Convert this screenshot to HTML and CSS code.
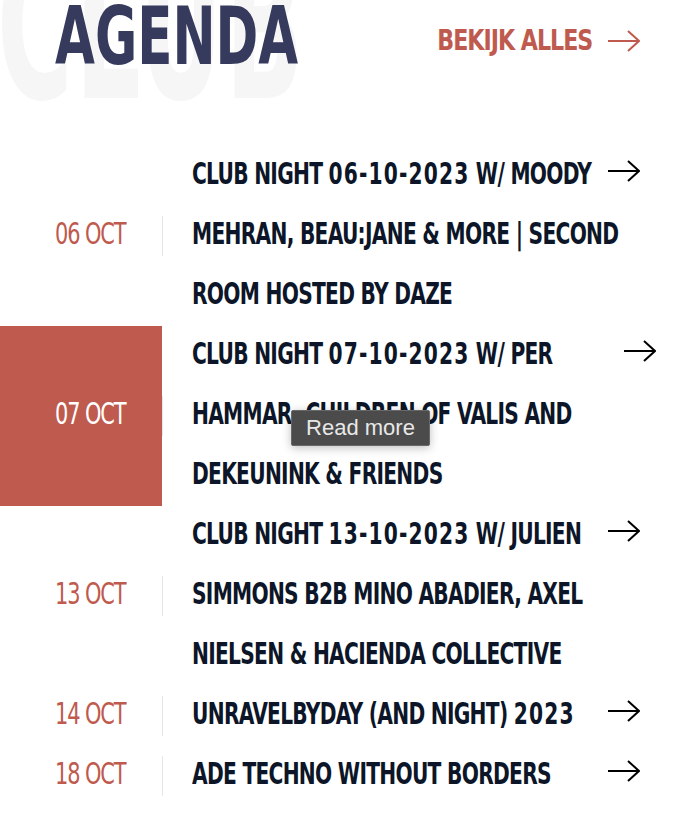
FILE: index.html
```html
<!DOCTYPE html>
<html lang="nl">
<head>
<meta charset="utf-8">
<title>Agenda</title>
<link rel="stylesheet" href="styles.css">
</head>
<body>
<section class="agenda">
  <div class="bg-word" aria-hidden="true">CLUB</div>
  <header class="agenda-head">
    <h2 class="agenda-title">AGENDA</h2>
    <a class="see-all" href="#"><span class="see-all-text">BEKIJK ALLES</span>
      <svg class="arrow-icon" viewBox="0 0 32 22" width="32" height="22"><path d="M0 11H30M20 1L31 11L20 21" fill="none" stroke="currentColor" stroke-width="2"/></svg>
    </a>
  </header>
  <ul class="events">
    <li class="event">
      <div class="event-date"><span class="date-text">06 OCT</span></div>
      <div class="event-name"><span class="name-text">CLUB NIGHT <span class="num">06-10-2023</span> W/ MOODY<br>MEHRAN, BEAU:JANE &amp; MORE | SECOND<br>ROOM HOSTED BY DAZE</span></div>
      <span class="event-arrow"><svg class="arrow-icon" viewBox="0 0 32 22" width="32" height="22"><path d="M0 11H30M20 1L31 11L20 21" fill="none" stroke="currentColor" stroke-width="2"/></svg></span>
    </li>
    <li class="event is-active">
      <div class="event-date"><span class="date-text">07 OCT</span></div>
      <div class="event-name"><span class="name-text">CLUB NIGHT <span class="num">07-10-2023</span> W/ PER<br>HAMMAR, CHILDREN OF VALIS AND<br>DEKEUNINK &amp; FRIENDS</span></div>
      <span class="event-arrow"><svg class="arrow-icon" viewBox="0 0 32 22" width="32" height="22"><path d="M0 11H30M20 1L31 11L20 21" fill="none" stroke="currentColor" stroke-width="2"/></svg></span>
    </li>
    <li class="event">
      <div class="event-date"><span class="date-text">13 OCT</span></div>
      <div class="event-name"><span class="name-text">CLUB NIGHT <span class="num">13-10-2023</span> W/ JULIEN<br>SIMMONS B2B MINO ABADIER, AXEL<br>NIELSEN &amp; HACIENDA COLLECTIVE</span></div>
      <span class="event-arrow"><svg class="arrow-icon" viewBox="0 0 32 22" width="32" height="22"><path d="M0 11H30M20 1L31 11L20 21" fill="none" stroke="currentColor" stroke-width="2"/></svg></span>
    </li>
    <li class="event">
      <div class="event-date"><span class="date-text">14 OCT</span></div>
      <div class="event-name"><span class="name-text">UNRAVELBYDAY (AND NIGHT) <span class="num">2023</span></span></div>
      <span class="event-arrow"><svg class="arrow-icon" viewBox="0 0 32 22" width="32" height="22"><path d="M0 11H30M20 1L31 11L20 21" fill="none" stroke="currentColor" stroke-width="2"/></svg></span>
    </li>
    <li class="event">
      <div class="event-date"><span class="date-text">18 OCT</span></div>
      <div class="event-name"><span class="name-text">ADE TECHNO WITHOUT BORDERS</span></div>
      <span class="event-arrow"><svg class="arrow-icon" viewBox="0 0 32 22" width="32" height="22"><path d="M0 11H30M20 1L31 11L20 21" fill="none" stroke="currentColor" stroke-width="2"/></svg></span>
    </li>
  </ul>
  <div class="tooltip">Read more</div>
</section>
</body>
</html>
```

FILE: styles.css
```css
* { box-sizing: border-box; }

html, body {
  margin: 0;
  padding: 0;
  background: #ffffff;
}

body {
  width: 700px;
  height: 830px;
  overflow: hidden;
  font-family: "DejaVu Sans Condensed", "DejaVu Sans", "Liberation Sans", sans-serif;
}

.agenda {
  position: relative;
  overflow: hidden;
}

.bg-word {
  position: absolute;
  left: -3px;
  top: -75px;
  font-size: 205px;
  line-height: 1;
  font-weight: 700;
  color: #f6f6f6;
  transform: scaleX(0.56);
  transform-origin: left top;
  letter-spacing: 4px;
  z-index: 0;
  white-space: nowrap;
}

.agenda-head {
  position: relative;
  z-index: 1;
  height: 146px;
  display: flex;
  justify-content: space-between;
  align-items: flex-start;
  padding: 0 60px 0 55px;
}

.agenda-title {
  margin: -3px 0 0;
  font-size: 80px;
  line-height: 80px;
  font-weight: 700;
  color: #363a5d;
  transform: scaleX(0.716);
  transform-origin: left center;
  white-space: nowrap;
}

.see-all {
  margin-top: 26px;
  display: flex;
  align-items: center;
  gap: 16px;
  color: #bf5a4e;
  text-decoration: none;
  white-space: nowrap;
}

.see-all-text {
  display: inline-block;
  font-size: 29px;
  line-height: 29px;
  font-weight: 700;
  letter-spacing: -1.2px;
  transform: scaleX(0.85);
  transform-origin: right center;
}

.events {
  position: relative;
  z-index: 1;
  list-style: none;
  margin: 0;
  padding: 0;
}

.event {
  display: grid;
  grid-template-columns: 162px minmax(0, 1fr) auto;
  align-items: stretch;
}

.event-date {
  position: relative;
  display: flex;
  align-items: center;
  padding: 0 0 5px 55px;
  color: #bf5a4e;
  white-space: nowrap;
}

.date-text {
  display: inline-block;
  font-size: 31px;
  line-height: 1;
  font-weight: 400;
  letter-spacing: -1.5px;
  transform: scaleX(0.75);
  transform-origin: left center;
}

.event-date::after {
  content: "";
  position: absolute;
  right: -1px;
  top: 50%;
  width: 1px;
  height: 40px;
  margin-top: -20px;
  background: #e6e6e6;
}

.event-name {
  min-width: 0;
  margin: -3px 0 3px;
  padding-left: 30px;
  white-space: nowrap;
}

.name-text {
  display: inline-block;
  font-size: 31px;
  line-height: 60px;
  font-weight: 700;
  letter-spacing: -1px;
  color: #0c1628;
  transform: scaleX(0.725);
  transform-origin: left center;
}

.num {
  letter-spacing: 1.6px;
}

.event-arrow {
  display: flex;
  align-items: flex-start;
  padding: 14px 60px 0 12px;
  color: #000000;
}

.arrow-icon {
  display: block;
  width: 32px;
  height: 22px;
}

.is-active .event-date {
  background: #bf5a4e;
  color: #ffffff;
}

.is-active .event-arrow {
  padding-right: 44px;
}

.tooltip {
  position: absolute;
  left: 291px;
  top: 410px;
  z-index: 2;
  width: 139px;
  height: 36px;
  display: flex;
  align-items: center;
  justify-content: center;
  background: #4b4b4b;
  border: 1px solid #686868;
  border-radius: 2px;
  box-shadow: 0 2px 10px rgba(0, 0, 0, 0.25);
  color: #e8e8e8;
  font-family: "Liberation Sans", Arial, sans-serif;
  font-size: 22px;
}
```
